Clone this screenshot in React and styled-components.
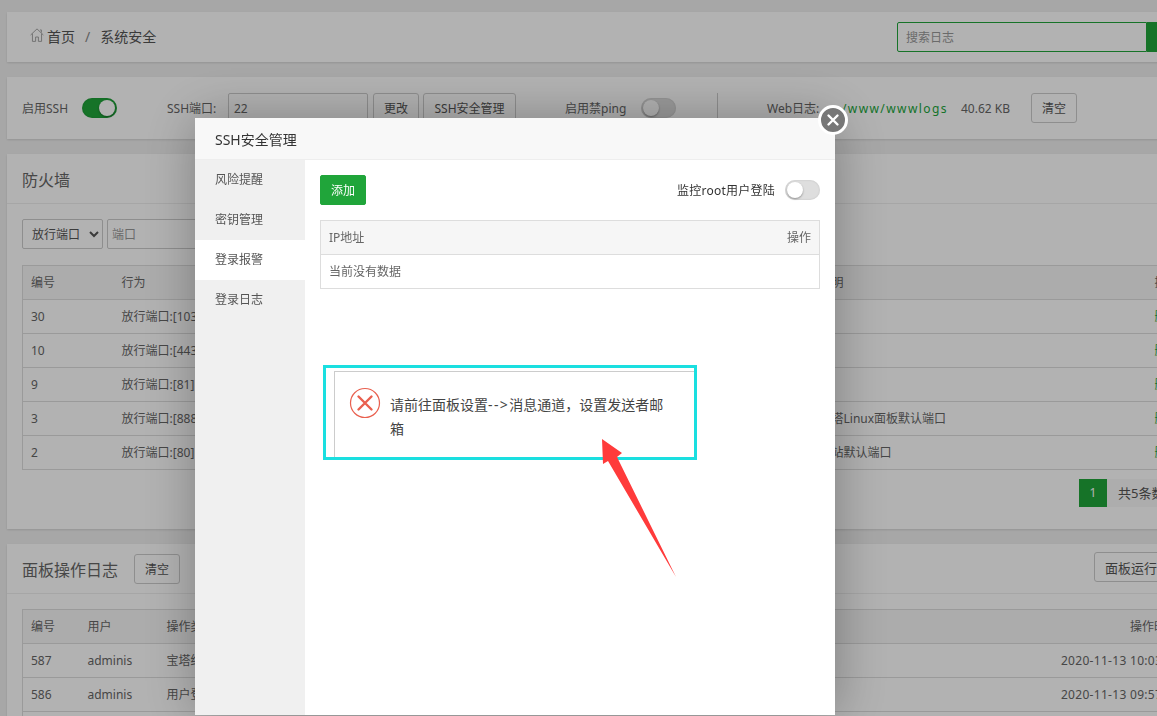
import React from 'react'
import styled, { createGlobalStyle } from 'styled-components'

const Global = createGlobalStyle`
  html, body {
    margin: 0;
    height: 100%;
    overflow: hidden;
    background: #f0f0f0;
  }
  body, input, select, button {
    font-family: "Noto Sans", "Noto Sans CJK SC", "Liberation Sans", sans-serif;
    font-size: 12px;
    color: #666;
  }
`

const Page = styled.div`
  width: 1200px;
  padding: 12px 0 0 7px;
  display: flex;
  flex-direction: column;
  gap: 15px;
`

const Card = styled.section`
  background: #fff;
  box-shadow: 0 1px 2px rgba(0, 0, 0, 0.12);
`

const TopBar = styled(Card)`
  height: 50px;
  padding: 0 20px 0 23px;
  display: flex;
  align-items: center;
  justify-content: space-between;
`

const Crumbs = styled.div`
  display: flex;
  align-items: center;
  font-size: 14px;
  color: #555;
  line-height: 20px;

  svg {
    margin-right: 3px;
    margin-top: -5px;
  }

  i {
    font-style: normal;
    color: #888;
    margin: 0 10px;
  }
`

const Search = styled.div`
  display: flex;
  height: 30px;

  input {
    width: 250px;
    height: 30px;
    box-sizing: border-box;
    border: 1px solid #20a53a;
    border-radius: 2px 0 0 2px;
    outline: none;
    padding: 0 8px;
  }

  input::placeholder {
    color: #999;
  }

  span {
    width: 40px;
    background: #20a53a;
  }
`

const SettingsBar = styled(Card)`
  height: 62px;
  padding-left: 15px;
  display: flex;
  align-items: center;
`

const Label = styled.span`
  width: ${p => p.$w}px;
  margin-left: ${p => p.$ml || 0}px;
  flex: none;
  white-space: nowrap;
  color: ${p => p.$color || '#666'};
  letter-spacing: ${p => p.$spacing || 0}px;
`

const Toggle = styled.span`
  position: relative;
  display: block;
  flex: none;
  width: 35px;
  height: 20px;
  border-radius: 10px;
  background: ${p => (p.$on ? '#20a53a' : '#dedede')};
  box-shadow: inset 0 0 2px rgba(0, 0, 0, 0.15);

  &::after {
    content: '';
    position: absolute;
    top: 2px;
    left: ${p => (p.$on ? '17px' : '2px')};
    width: 16px;
    height: 16px;
    border-radius: 50%;
    background: #fff;
    box-shadow: 0 1px 2px rgba(0, 0, 0, 0.35);
  }
`

const PortInput = styled.input`
  width: 140px;
  height: 30px;
  box-sizing: border-box;
  flex: none;
  border: 1px solid #ccc;
  border-radius: 2px;
  padding: 0 5px;
`

const Button = styled.button`
  height: 30px;
  padding: 0;
  flex: none;
  width: ${p => p.$w}px;
  margin-left: ${p => p.$ml || 0}px;
  background: #fff;
  border: 1px solid #ccc;
  border-radius: 3px;
  color: #555;
`

const VLine = styled.span`
  flex: none;
  width: 1px;
  height: 30px;
  margin-left: 41px;
  background: #ccc;
`

const Panel = styled(Card)`
  display: flex;
  flex-direction: column;
`

const PanelHead = styled.header`
  height: 49px;
  padding: 0 13px 0 15px;
  border-bottom: 1px solid #eee;
  display: flex;
  align-items: center;
  font-size: 16px;
  color: #666;
`

const RightButton = styled(Button)`
  margin-left: auto;
  margin-top: -3px;
  font-size: 13px;
`

const PanelBody = styled.div`
  padding: 15px 15px 22px;
`

const Filter = styled.div`
  display: flex;
  gap: 4px;
  margin-bottom: 16px;

  select {
    width: 81px;
    height: 30px;
    border: 1px solid #ccc;
    border-radius: 2px;
    background: #fff;
    color: #555;
    padding-left: 5px;
  }

  input {
    width: 200px;
    height: 30px;
    box-sizing: border-box;
    border: 1px solid #ccc;
    border-radius: 2px;
    padding: 0 4px;
  }

  input::placeholder {
    color: #999;
  }
`

const Table = styled.table`
  width: 100%;
  table-layout: fixed;
  border-collapse: collapse;
  border: 1px solid #ddd;

  th, td {
    height: 33px;
    padding: 0 8px;
    border-bottom: 1px solid #ddd;
    text-align: left;
    font-weight: 400;
    white-space: nowrap;
    overflow: hidden;
    line-height: 16px;
    color: #666;
  }

  th {
    background: #f6f6f6;
  }

  th.right, td.right {
    text-align: right;
  }

  th.time-head {
    text-align: right;
    padding-right: 13px;
  }

  td.time {
    text-align: right;
    padding-right: 11px;
    letter-spacing: 0.3px;
  }

  td.link {
    color: #20a53a;
  }
`

const Pager = styled.div`
  display: flex;
  justify-content: flex-end;
  margin-top: 9px;
  height: 28px;
  font-size: 13px;
  line-height: 28px;

  b {
    width: 28px;
    background: #20a53a;
    color: #fff;
    font-weight: 400;
    text-align: center;
    font-size: 12px;
  }

  span {
    width: 85px;
    padding-left: 11px;
    box-sizing: border-box;
    background: #f8f8f8;
    color: #555;
    white-space: nowrap;
    overflow: hidden;
  }
`

const Backdrop = styled.div`
  position: fixed;
  inset: 0;
  background: rgba(0, 0, 0, 0.3);
`

const Modal = styled.div`
  position: fixed;
  left: 195px;
  top: 118px;
  width: 640px;
  height: 597px;
  background: #fff;
  box-shadow: 1px 1px 50px rgba(0, 0, 0, 0.3);
  display: flex;
  flex-direction: column;
`

const ModalTitle = styled.div`
  height: 41px;
  flex: none;
  padding-left: 20px;
  background: #f8f8f8;
  border-bottom: 1px solid #eee;
  font-size: 14px;
  line-height: 44px;
  color: #333;
`

const CloseBtn = styled.span`
  position: absolute;
  top: -13px;
  right: -13px;
  width: 24px;
  height: 24px;
  border: 3px solid #fff;
  border-radius: 50%;
  background: #777;
  display: flex;
  align-items: center;
  justify-content: center;
`

const ModalBody = styled.div`
  flex: 1;
  display: flex;
  min-height: 0;
`

const Nav = styled.nav`
  width: 110px;
  flex: none;
  background: #f0f0f0;
`

const NavItem = styled.div`
  height: 40px;
  line-height: 40px;
  padding-left: 20px;
  color: #555;
  background: ${p => (p.$active ? '#fff' : 'transparent')};
`

const Content = styled.div`
  flex: 1;
  padding: 15px;
`

const ContentTop = styled.div`
  display: flex;
  align-items: center;
  justify-content: space-between;
  margin-bottom: 15px;
`

const AddButton = styled.button`
  width: 46px;
  height: 30px;
  padding: 0;
  background: #20a53a;
  border: 1px solid #20a53a;
  border-radius: 2px;
  color: #fff;
`

const Monitor = styled.div`
  display: flex;
  align-items: center;
  gap: 10px;
  color: #333;
  letter-spacing: 0.25px;
`

const Alert = styled.div`
  position: absolute;
  left: 139px;
  top: 253px;
  width: 363px;
  height: 89px;
  box-sizing: border-box;
  background: #fff;
  border: 1px solid #ccc;
  padding: 21px 0 0 55px;
  font-size: 14px;
  line-height: 24px;
  color: #444;

  p {
    width: 280px;
    margin: 0;
  }

  svg {
    position: absolute;
    left: 14px;
    top: 15px;
  }
`

const Dashes = styled.span`
  letter-spacing: 1.4px;
`

const Highlight = styled.div`
  position: absolute;
  left: 128px;
  top: 247px;
  width: 374px;
  height: 95px;
  box-sizing: border-box;
  border: 3px solid #1adfe0;
`

const Arrow = styled.svg`
  position: absolute;
  left: 400px;
  top: 315px;
`

const firewall = [
  ['30', '放行端口:[1030]', ''],
  ['10', '放行端口:[443]', ''],
  ['9', '放行端口:[81]', ''],
  ['3', '放行端口:[8888]', '宝塔Linux面板默认端口'],
  ['2', '放行端口:[80]', '网站默认端口'],
]

const logs = [
  ['587', 'adminis', '2020-11-13 10:03:21'],
  ['586', 'adminis', '2020-11-13 09:57:48'],
]

export default function App() {
  return (
    <>
      <Global />
      <Page>
        <TopBar>
          <Crumbs>
            <svg width="14" height="14" viewBox="0 0 16 16" fill="none" stroke="#999" strokeWidth="1">
              <path d="M.7 8 8 1l7.3 7M2.8 6.5v8.8h3.6v-5h3.2v5h3.6V6.5M11.5 2.2h1.5v3" />
            </svg>
            首页<i>/</i>系统安全
          </Crumbs>
          <Search>
            <input placeholder="搜索日志" />
            <span />
          </Search>
        </TopBar>

        <SettingsBar>
          <Label $w={60}>启用SSH</Label>
          <Toggle $on />
          <Label $w={61} $ml={50}>SSH端口:</Label>
          <PortInput defaultValue="22" />
          <Button $w={46} $ml={5}>更改</Button>
          <Button $w={93} $ml={4}>SSH安全管理</Button>
          <Label $w={76} $ml={49}>启用禁ping</Label>
          <Toggle />
          <VLine />
          <Label $w={75} $ml={49}>Web日志:</Label>
          <Label $w={119} $color="#20a53a" $spacing={1.4}>/www/wwwlogs</Label>
          <Label $w={70}>40.62 KB</Label>
          <Button $w={46}>清空</Button>
        </SettingsBar>

        <Panel>
          <PanelHead>防火墙</PanelHead>
          <PanelBody>
            <Filter>
              <select defaultValue="放行端口"><option>放行端口</option></select>
              <input placeholder="端口" />
            </Filter>
            <Table>
              <colgroup>
                <col style={{ width: 91 }} />
                <col style={{ width: 698 }} />
                <col style={{ width: 335 }} />
                <col />
              </colgroup>
              <thead>
                <tr><th>编号</th><th>行为</th><th>说明</th><th>操作</th></tr>
              </thead>
              <tbody>
                {firewall.map(row => (
                  <tr key={row[0]}>
                    <td>{row[0]}</td>
                    <td>{row[1]}</td>
                    <td>{row[2]}</td>
                    <td className="link">删除</td>
                  </tr>
                ))}
              </tbody>
            </Table>
            <Pager>
              <b>1</b>
              <span>共5条数据</span>
            </Pager>
          </PanelBody>
        </Panel>

        <Panel>
          <PanelHead>
            面板操作日志
            <Button $w={46} $ml={16}>清空</Button>
            <RightButton $w={100}>面板运行日志</RightButton>
          </PanelHead>
          <PanelBody>
            <Table>
              <colgroup>
                <col style={{ width: 57 }} />
                <col style={{ width: 79 }} />
                <col style={{ width: 700 }} />
                <col />
              </colgroup>
              <thead>
                <tr><th>编号</th><th>用户</th><th>操作类型</th><th className="time-head">操作时间</th></tr>
              </thead>
              <tbody>
                {logs.map(row => (
                  <tr key={row[0]}>
                    <td>{row[0]}</td>
                    <td>{row[1]}</td>
                    <td>{row[0] === '587' ? '宝塔终端' : '用户登录'}</td>
                    <td className="time">{row[2]}</td>
                  </tr>
                ))}
                <tr><td /><td /><td /><td /></tr>
              </tbody>
            </Table>
          </PanelBody>
        </Panel>
      </Page>

      <Backdrop />

      <Modal>
        <ModalTitle>SSH安全管理</ModalTitle>
        <CloseBtn>
          <svg width="14" height="14" viewBox="0 0 14 14" stroke="#fff" strokeWidth="2.4" strokeLinecap="round">
            <path d="M2.5 2.5l9 9M11.5 2.5l-9 9" />
          </svg>
        </CloseBtn>
        <ModalBody>
          <Nav>
            <NavItem>风险提醒</NavItem>
            <NavItem>密钥管理</NavItem>
            <NavItem $active>登录报警</NavItem>
            <NavItem>登录日志</NavItem>
          </Nav>
          <Content>
            <ContentTop>
              <AddButton>添加</AddButton>
              <Monitor>监控root用户登陆<Toggle /></Monitor>
            </ContentTop>
            <Table>
              <colgroup>
                <col />
                <col style={{ width: 60 }} />
              </colgroup>
              <thead>
                <tr><th>IP地址</th><th className="right">操作</th></tr>
              </thead>
              <tbody>
                <tr><td colSpan="2">当前没有数据</td></tr>
              </tbody>
            </Table>
          </Content>
        </ModalBody>

        <Alert>
          <svg width="32" height="32" viewBox="0 0 32 32" fill="none" stroke="#e9604f">
            <circle cx="16" cy="16" r="14.5" strokeWidth="1.2" />
            <path d="M9.5 9.5l13 13M22.5 9.5l-13 13" strokeWidth="2.4" strokeLinecap="round" />
          </svg>
          <p>请前往面板设置<Dashes>--&gt;</Dashes>消息通道，设置发送者邮箱</p>
        </Alert>
        <Highlight />
        <Arrow width="90" height="150" viewBox="0 0 90 150">
          <path d="M7 6 27 20 22 24 81 144 13 28 8 31Z" fill="#ff3b3b" />
        </Arrow>
      </Modal>
    </>
  )
}
